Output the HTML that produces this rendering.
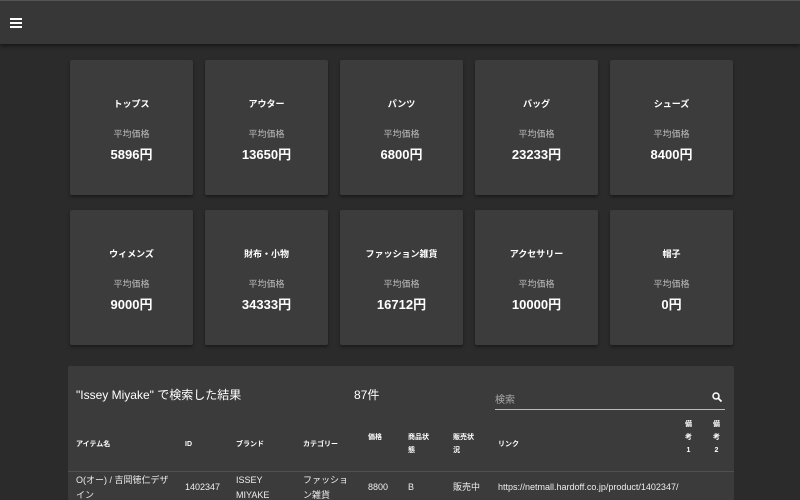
<!DOCTYPE html>
<html><head><meta charset="utf-8"><style>
*{margin:0;padding:0;box-sizing:border-box}
html,body{width:800px;height:500px;overflow:hidden}
body{background:#2b2b2b;font-family:"Liberation Sans","Noto Sans CJK JP",sans-serif;color:#fff;position:relative}
.bar{position:absolute;left:0;top:0;width:800px;height:44px;background:#373737;box-shadow:0 2px 4px rgba(0,0,0,.5);border-top:1px solid #555}
.ham{position:absolute;left:10px;top:17px;width:12px}
.ham i{display:block;height:2px;background:#fff;margin-bottom:2px}
.card{position:absolute;width:123px;height:135px;background:#3c3c3c;box-shadow:0 2px 3px rgba(0,0,0,.4);text-align:center;border-radius:2px}
.t{position:absolute;top:37px;width:100%;font-size:9px;font-weight:bold}
.s{position:absolute;top:67px;width:100%;font-size:9px;color:#bbb}
.p{position:absolute;top:84px;width:100%;font-size:13px;font-weight:bold}
.panel{position:absolute;left:68px;top:366px;width:666px;height:134px;background:#3b3b3b;border-radius:2px;overflow:hidden}
.a{position:absolute;white-space:nowrap}
.h{font-size:7px;font-weight:bold;line-height:13px}
.c{font-size:9px;line-height:15px;color:#eee}
</style></head><body>
<div class="bar"><div class="ham"><i></i><i></i><i></i></div></div>

<div class="card" style="left:70px;top:60px"><div class="t">トップス</div><div class="s">平均価格</div><div class="p">5896円</div></div>
<div class="card" style="left:205px;top:60px"><div class="t">アウター</div><div class="s">平均価格</div><div class="p">13650円</div></div>
<div class="card" style="left:340px;top:60px"><div class="t">パンツ</div><div class="s">平均価格</div><div class="p">6800円</div></div>
<div class="card" style="left:475px;top:60px"><div class="t">バッグ</div><div class="s">平均価格</div><div class="p">23233円</div></div>
<div class="card" style="left:610px;top:60px"><div class="t">シューズ</div><div class="s">平均価格</div><div class="p">8400円</div></div>

<div class="card" style="left:70px;top:210px"><div class="t">ウィメンズ</div><div class="s">平均価格</div><div class="p">9000円</div></div>
<div class="card" style="left:205px;top:210px"><div class="t">財布・小物</div><div class="s">平均価格</div><div class="p">34333円</div></div>
<div class="card" style="left:340px;top:210px"><div class="t">ファッション雑貨</div><div class="s">平均価格</div><div class="p">16712円</div></div>
<div class="card" style="left:475px;top:210px"><div class="t">アクセサリー</div><div class="s">平均価格</div><div class="p">10000円</div></div>
<div class="card" style="left:610px;top:210px"><div class="t">帽子</div><div class="s">平均価格</div><div class="p">0円</div></div>

<div class="panel">
<div class="a" style="left:8px;top:20px;font-size:12px">"Issey Miyake" で検索した結果</div>
<div class="a" style="left:286px;top:20px;font-size:12px">87件</div>
<div class="a" style="left:427px;top:25px;font-size:10px;color:#aaa">検索</div>
<svg class="a" style="left:643px;top:25px" width="12" height="12" viewBox="0 0 24 24"><circle cx="10" cy="10" r="6" fill="none" stroke="#fff" stroke-width="3"/><path d="M14.5 14.5L21 21" stroke="#fff" stroke-width="3.5"/></svg>
<div class="a" style="left:427px;top:43px;width:230px;height:1px;background:#bbb"></div>

<div class="a h" style="left:8px;top:72px">アイテム名</div>
<div class="a h" style="left:117px;top:72px">ID</div>
<div class="a h" style="left:168px;top:72px">ブランド</div>
<div class="a h" style="left:235px;top:72px">カテゴリー</div>
<div class="a h" style="left:300px;top:65px">価格</div>
<div class="a h" style="left:340px;top:65px">商品状<br>態</div>
<div class="a h" style="left:385px;top:65px">販売状<br>況</div>
<div class="a h" style="left:430px;top:72px">リンク</div>
<div class="a h" style="left:617px;top:52px;text-align:center">備<br>考<br>1</div>
<div class="a h" style="left:645px;top:52px;text-align:center">備<br>考<br>2</div>
<div class="a" style="left:0;top:105px;width:666px;height:1px;background:#505050"></div>

<div class="a c" style="left:8px;top:107px">O(オー) / 吉岡徳仁デザ<br>イン</div>
<div class="a c" style="left:117px;top:114px">1402347</div>
<div class="a c" style="left:168px;top:107px">ISSEY<br>MIYAKE</div>
<div class="a c" style="left:235px;top:107px">ファッショ<br>ン雑貨</div>
<div class="a c" style="left:300px;top:114px">8800</div>
<div class="a c" style="left:340px;top:114px">B</div>
<div class="a c" style="left:385px;top:114px">販売中</div>
<div class="a c" style="left:430px;top:114px">https://netmall.hardoff.co.jp/product/1402347/</div>
</div>
</body></html>
